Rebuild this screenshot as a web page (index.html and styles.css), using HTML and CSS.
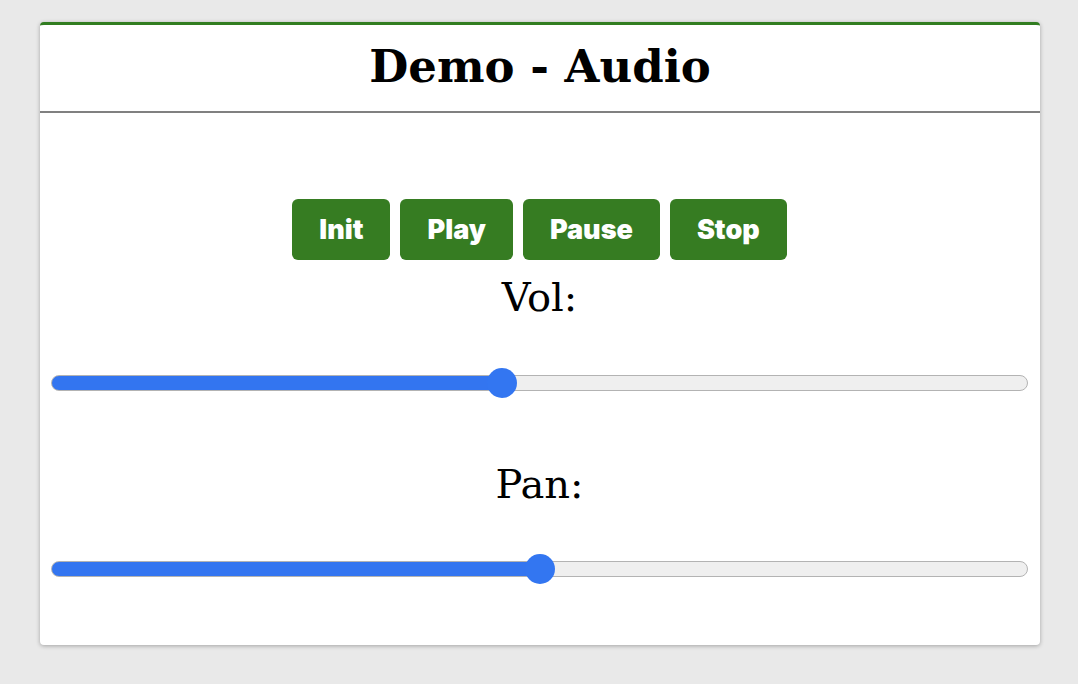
FILE: index.html
```html
<!DOCTYPE html>
<html lang="en">
<head>
<meta charset="utf-8">
<title>Demo - Audio</title>
<link rel="stylesheet" href="styles.css">
</head>
<body>
<div class="card">
  <div class="card-header">
    <h1 class="title">Demo - Audio</h1>
  </div>
  <div class="card-body">
    <div class="buttons">
      <button class="btn">Init</button>
      <button class="btn">Play</button>
      <button class="btn">Pause</button>
      <button class="btn">Stop</button>
    </div>
    <label class="label label-vol" for="vol">Vol:</label>
    <input class="slider slider-vol" id="vol" type="range" min="0" max="100" value="46" style="--fill:46.1%">
    <label class="label label-pan" for="pan">Pan:</label>
    <input class="slider slider-pan" id="pan" type="range" min="0" max="100" value="50" style="--fill:50%">
  </div>
</div>
</body>
</html>
```

FILE: styles.css
```css
html, body {
  margin: 0;
  padding: 0;
}
body {
  background: #e9e9e9;
  width: 1078px;
  height: 684px;
  padding: 22px 38px 0 40px;
  box-sizing: border-box;
}
.card {
  width: 1000px;
  height: 623px;
  background: #ffffff;
  border-top: 3px solid #317d20;
  border-radius: 4px;
  box-shadow: 0 1px 4px rgba(0, 0, 0, 0.3);
  box-sizing: border-box;
  display: flex;
  flex-direction: column;
}
.card-header {
  height: 86px;
  border-bottom: 2px solid #808080;
  display: flex;
  justify-content: center;
  align-items: flex-end;
}
.title {
  margin: 0 0 18px 0;
  font-family: "DejaVu Serif", serif;
  font-weight: bold;
  font-size: 45px;
  line-height: 52px;
  color: #000;
}
.card-body {
  padding: 86px 12px 0 11px;
  display: flex;
  flex-direction: column;
  align-items: center;
}
.buttons {
  display: flex;
  gap: 10px;
}
.btn {
  height: 61px;
  padding: 0 27px;
  border: none;
  border-radius: 6px;
  background: #367c22;
  color: #ffffff;
  font-family: Inter, "Noto Sans", sans-serif;
  font-weight: 900;
  font-size: 27px;
  letter-spacing: 0;
}
.label {
  font-family: "DejaVu Serif", serif;
  font-size: 40px;
  line-height: 46px;
  color: #000;
}
.label-vol {
  margin-top: 14px;
}
.label-pan {
  margin-top: 62px;
}
.slider {
  -webkit-appearance: none;
  appearance: none;
  width: 977px;
  height: 32px;
  margin: 0;
  background: transparent;
}
.slider-vol {
  margin-top: 47px;
}
.slider-pan {
  margin-top: 46px;
}
.slider::-webkit-slider-runnable-track {
  height: 16px;
  border-radius: 8px;
  border: 1px solid #b3b3b3;
  box-sizing: border-box;
  background: linear-gradient(to right, #3375f0 var(--fill), #efefef var(--fill));
}
.slider::-webkit-slider-thumb {
  -webkit-appearance: none;
  appearance: none;
  width: 30px;
  height: 30px;
  border-radius: 50%;
  background: #3376f1;
  border: none;
  margin-top: -8px;
}
```
